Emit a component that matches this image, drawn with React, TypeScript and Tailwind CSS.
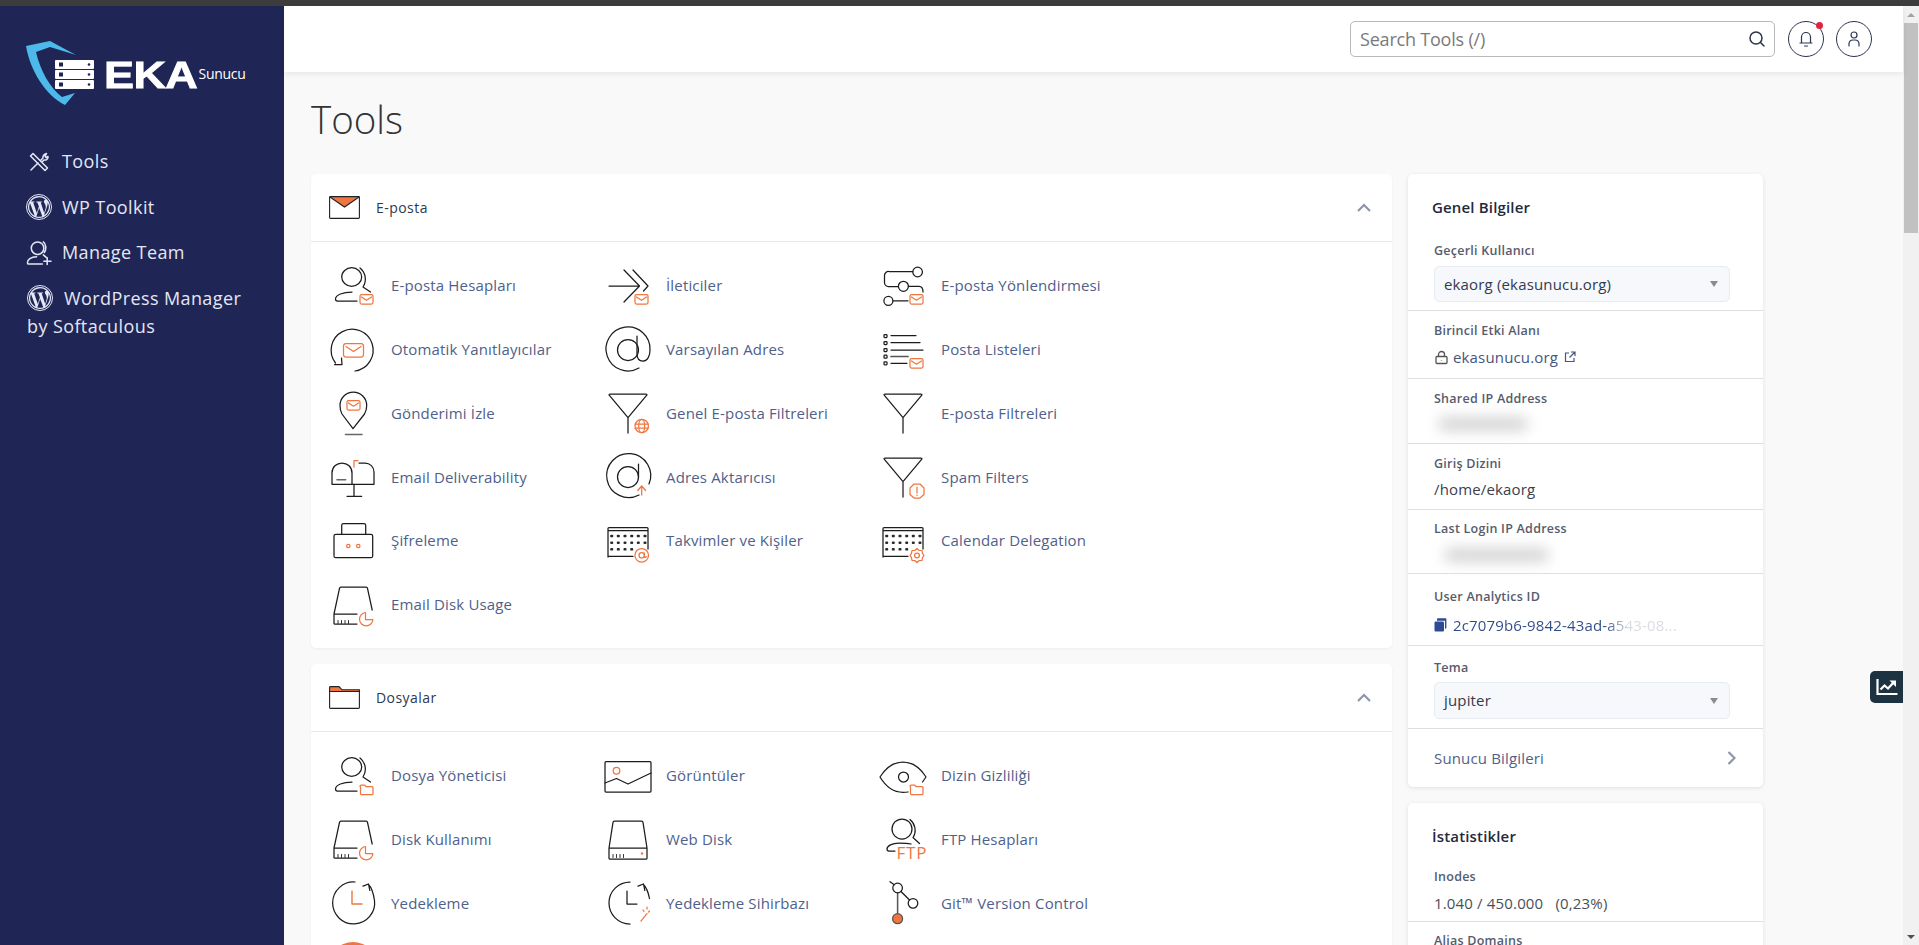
import React from "react";

const K = "#1c1c1c";
const O = "#f0763f";

function Svg({ children }: { children: React.ReactNode }) {
  return (
    <svg width={44} height={44} viewBox="0 0 44 44" fill="none" stroke={K} strokeWidth={1.25} strokeLinecap="round" strokeLinejoin="round" className="shrink-0 overflow-visible">
      {children}
    </svg>
  );
}

const Mail = ({ x = 29, y = 30.5 }: { x?: number; y?: number }) => (
  <g stroke={O}>
    <rect x={x} y={y} width={13} height={9.5} rx={1.5} />
    <path d={`M${x + 1.5} ${y + 2.5}l5 3.2 5-3.2`} />
  </g>
);
const Folder = () => (
  <g stroke={O}>
    <path d="M29.500 33v6.500a1 1 0 0 0 1 1h10.500a1 1 0 0 0 1-1v-6a1 1 0 0 0-1-1h-6l-1.500-1.500h-3.500a1 1 0 0 0-1 1z" />
  </g>
);
const Person = () => (
  <>
    <ellipse cx="20.700" cy="13" rx="10" ry="9.300" />
    <path d="M29 4c5 4 7.500 12 3 19l7.500 5" />
    <path d="M21 28c-9 0-16.500 3-16.500 7 0 1.300.7 2 2 2H26" />
  </>
);
const Funnel = () => <path d="M4 3h36c.7 0 1.200.5.800 1.200L22 26.700 3.200 4.200C2.800 3.500 3.300 3 4 3zM22 26.700V42" />;

const DiskBody = ({ open }: { open?: boolean }) => (
  <>
    <path d={open ? "M41.200 27 36.500 5.300c-.1-.8-.6-1.300-1.500-1.300H10c-.9 0-1.400.5-1.500 1.300L3 31v9.500c0 .3.200.5.500.5H26M3 31h23" : "M3 31 7 5.300c.1-.8.600-1.300 1.500-1.300h27c.9 0 1.400.5 1.500 1.300L41 31v10.300c0 .4-.3.700-.7.700H3.700a.7.7 0 0 1-.7-.7zM3 31h38"} />
    <path d="M7 37.500v3M10.500 37.500v3M14 37.500v3M17.500 37.500v3" strokeWidth={0.9} />
  </>
);
const Pie = () => (
  <g stroke={O}>
    <path d="M34.500 29.500a6.700 6.700 0 1 0 7.400 7h-7.400z" />
  </g>
);
const Cal = () => (
  <>
    <path d="M2 38V9.500c0-.6.400-1 1-1h38c.6 0 1 .4 1 1V30M2 11.500h40M2 37.300h25" />
    {[17, 23.7, 30.3].map((y, r) =>
      [5.700, 12.300, 19, 25.700, 32.300, 39].slice(0, r === 2 ? 4 : 6).map((x) => (
        <rect key={`${x}${y}`} x={x - 1.5} y={y - 1.300} width="3" height="2.600" rx=".9" fill="#2a2a2a" stroke="none" />
      ))
    )}
  </>
);
const ClockBase = () => <path d="M24 1A21 21 0 1 0 43.500 19.500M32 5.200 37.500 3l1.300 6.500M37.500 3.500c3 3 5 9 6 16" />;

const icons: Record<string, React.ReactNode> = {
  account: (
    <Svg>
      <Person />
      <Mail />
    </Svg>
  ),
  forwarder: (
    <Svg>
      <path d="M3 22h29.500M18 6l15.500 16L18 38M27 6l15 16-4.500 5" />
      <Mail />
    </Svg>
  ),
  routing: (
    <Svg>
      <circle cx="36.600" cy="8" r="4.800" />
      <path d="M31.800 7.500H8a4 4 0 0 0-4.500 4v7a4 4 0 0 0 4 4h9.500" />
      <circle cx="22.400" cy="22.300" r="5" />
      <path d="M27.400 22.300h10.600c2.500 0 4 1.500 4 5.700" />
      <circle cx="7.400" cy="36.800" r="4.500" />
      <path d="M12 36.800h15" />
      <Mail />
    </Svg>
  ),
  auto: (
    <Svg>
      <path d="M24 43a21 21 0 1 0-19.500-8M3.500 36.500H11l-.5-6.500" />
      <rect x="12.500" y="15.500" width="20" height="13.500" rx="2.500" stroke={O} />
      <path d="M15 18.500l7.500 5 7.500-5" stroke={O} />
    </Svg>
  ),
  at: (
    <Svg>
      <path d="M33 40a22 22 0 1 1 11-18c0 5-2 11-7 11-4 0-6-3-6-7V8" />
      <circle cx="22" cy="22" r="10.500" />
    </Svg>
  ),
  list: (
    <Svg>
      {[8, 15, 22, 28.700, 35.300].map((y) => (
        <rect key={y} x="3" y={y - 1.500} width="3" height="3" rx=".7" />
      ))}
      <path d="M10 7.500h25M10 14.500h29M10 22h32M10 35.300h16" />
      <path d="M10 28.500h17" strokeWidth="1.700" stroke="#555" />
      <Mail />
    </Svg>
  ),
  track: (
    <Svg>
      <path d="M22 37.700 11 23C9.500 20.500 9 17.500 9 14.500 9 7 15 1 22.300 1S35.700 7 35.700 14.500c0 3-.7 6-2.200 8.500z" />
      <Mail x={16} y={9.500} />
      <path d="M14.500 43.500h16.500" strokeWidth="1.500" stroke="#666" />
    </Svg>
  ),
  funnelGlobe: (
    <Svg>
      <Funnel />
      <g stroke={O}>
        <circle cx="35.700" cy="35" r="6.700" />
        <ellipse cx="35.700" cy="35" rx="3" ry="6.700" />
        <path d="M29 33h13.500M29 37h13.500" />
      </g>
    </Svg>
  ),
  funnel: (
    <Svg>
      <Funnel />
    </Svg>
  ),
  funnelAlert: (
    <Svg>
      <Funnel />
      <g stroke={O}>
        <path d="M33 29h6l4 4v6.500L39 43h-6l-4-3.500V33z" />
        <path d="M36 32v6M36 40v.5" />
      </g>
    </Svg>
  ),
  mailbox: (
    <Svg>
      <path d="M20.700 29.300H1V18c0-6 4.500-10 10-10s10 4 10 10v11.300h22V17c0-5-4-9-9-9h-6" />
      <path d="M23 29.300v12M16 41.300h14.700" />
      <path d="M6 24.700h8.700" strokeWidth="1.500" stroke="#666" />
      <path d="M23 12V5.500h4" stroke={O} />
    </Svg>
  ),
  atUp: (
    <Svg>
      <path d="M33 40a22 22 0 1 1 10-11" />
      <circle cx="22" cy="22" r="10.500" />
      <path d="M32.500 9v13" />
      <path d="M35.700 40V31.500M31.800 35.500l3.900-4.500 3.900 4.500" stroke={O} />
    </Svg>
  ),
  crypt: (
    <Svg>
      <path d="M10.700 15.300V6.500c0-1 .8-1.800 1.800-1.800h20.400c1 0 1.800.8 1.800 1.800v8.800" />
      <rect x="3" y="15.300" width="38.700" height="23.400" rx="1.800" />
      <circle cx="17.300" cy="27" r="1.700" stroke={O} />
      <circle cx="27.300" cy="27" r="1.700" stroke={O} />
    </Svg>
  ),
  calAt: (
    <Svg>
      <Cal />
      <g stroke={O}>
        <circle cx="35.700" cy="36.300" r="6.800" />
        <circle cx="35.700" cy="36.300" r="2.700" />
        <path d="M38.400 34v3.500c0 1.300 1.700 1.300 1.900 0" />
      </g>
    </Svg>
  ),
  calGear: (
    <Svg>
      <Cal />
      <g stroke={O}>
        <path d="M36 29.500l2 1.800 3 .2.500 2.800 1.500 2.200-1.500 2.200-.5 2.800-3 .2-2 1.800-2-1.800-3-.2-.5-2.800L29 36.500l1.500-2.200.5-2.800 3-.2z" />
        <circle cx="36" cy="36.500" r="2.400" />
      </g>
    </Svg>
  ),
  diskPie: (
    <Svg>
      <DiskBody open />
      <Pie />
    </Svg>
  ),
  filePerson: (
    <Svg>
      <Person />
      <Folder />
    </Svg>
  ),
  images: (
    <Svg>
      <rect x="-1" y="7.700" width="46" height="30.300" rx="1" />
      <circle cx="10.500" cy="16.700" r="3.300" stroke={O} />
      <path d="M-1 29l11.500-4.500L22 30l23-11" />
    </Svg>
  ),
  eye: (
    <Svg>
      <path d="M27 38c-2 .3-3.500.3-5 .3-10 0-18-7-23-15.300C4 15 12 8 22 8s18 7 23 15l-3.500 5" />
      <circle cx="22.500" cy="23" r="5" />
      <Folder />
    </Svg>
  ),
  webDisk: (
    <Svg>
      <DiskBody />
      <circle cx="36" cy="36.500" r="1.200" fill={O} stroke="none" />
    </Svg>
  ),
  ftp: (
    <Svg>
      <ellipse cx="21" cy="12" rx="10" ry="10" />
      <path d="M29 2.500c5 4 7 12 3 18l6.500 6M30 27c-4-1-8-1-12-1-7 0-12 3-12 6 0 1.300.7 2 2 2h6" />
      <text x="15.500" y="42" fill={O} stroke="none" fontSize="17" letterSpacing=".8" fontFamily="'Open Sans',sans-serif">
        FTP
      </text>
    </Svg>
  ),
  backup: (
    <Svg>
      <ClockBase />
      <path d="M21 10v13h10" stroke={O} strokeWidth="1.400" />
    </Svg>
  ),
  wizard: (
    <Svg>
      <path d="M24 1A21 21 0 1 0 24 43M32 5.200 37.500 3l1.300 6.500M37.500 3.500c3 3 5 9 6 14" />
      <path d="M21 10v13h10" />
      <path d="M35 40l6-7.500M41 26v2M37 29l1 1.500M43.500 30l-1 1" stroke={O} strokeDasharray="2 1.200" />
    </Svg>
  ),
  git: (
    <Svg>
      <path d="M16.600 12v20.500" stroke="#555" strokeWidth="1.500" />
      <circle cx="16.600" cy="7" r="4.800" />
      <circle cx="32" cy="22.300" r="4.800" />
      <path d="M20 10.500l8.500 8.500M9 .7 13.200 3.700" />
      <circle cx="16.600" cy="37.700" r="5" fill={O} stroke="#555" />
    </Svg>
  ),
  restore: (
    <Svg>
      <circle cx="22" cy="22" r="25" fill={O} stroke="none" />
    </Svg>
  ),
};

type Item = [string, string];
const mail: Item[] = [
  ["account", "E-posta Hesapları"],
  ["forwarder", "İleticiler"],
  ["routing", "E-posta Yönlendirmesi"],
  ["auto", "Otomatik Yanıtlayıcılar"],
  ["at", "Varsayılan Adres"],
  ["list", "Posta Listeleri"],
  ["track", "Gönderimi İzle"],
  ["funnelGlobe", "Genel E-posta Filtreleri"],
  ["funnel", "E-posta Filtreleri"],
  ["mailbox", "Email Deliverability"],
  ["atUp", "Adres Aktarıcısı"],
  ["funnelAlert", "Spam Filters"],
  ["crypt", "Şifreleme"],
  ["calAt", "Takvimler ve Kişiler"],
  ["calGear", "Calendar Delegation"],
  ["diskPie", "Email Disk Usage"],
];
const files: Item[] = [
  ["filePerson", "Dosya Yöneticisi"],
  ["images", "Görüntüler"],
  ["eye", "Dizin Gizliliği"],
  ["diskPie", "Disk Kullanımı"],
  ["webDisk", "Web Disk"],
  ["ftp", "FTP Hesapları"],
  ["backup", "Yedekleme"],
  ["wizard", "Yedekleme Sihirbazı"],
  ["git", "Git™ Version Control"],
  ["restore", ""],
];

function Section({ icon, title, items }: { icon: React.ReactNode; title: string; items: Item[] }) {
  return (
    <section className="rounded-[5px] bg-white shadow-[0_1px_3px_rgba(0,0,0,0.05)]">
      <header className="flex h-[68px] items-center border-b border-[#e8e8e8] pl-[18px] pr-[21px]">
        <span className="flex w-[47px] shrink-0 items-center">{icon}</span>
        <span className="flex-1 text-[14px] tracking-[0.45px] text-[#2c3850]">{title}</span>
        <svg width="14" height="9" viewBox="0 0 14 9" fill="none" stroke="#8d95ab" strokeWidth="2.200">
          <path d="M1 8l6-6 6 6" />
        </svg>
      </header>
      <div className="grid grid-cols-[275px_275px_275px] pb-[11px] pl-[20px] pt-[12px]">
        {items.map(([k, t]) => (
          <div key={k + t} className="flex h-[63.8px] items-center gap-[16px]">
            {icons[k]}
            <span className="-mt-[1px] text-[15px] tracking-[0.16px] text-[#505f8b]">{t}</span>
          </div>
        ))}
      </div>
    </section>
  );
}

function Caret() {
  return <span className="h-0 w-0 border-x-[4px] border-t-[6px] border-x-transparent border-t-[#8b8b8b]" />;
}

function Select({ value, cls }: { value: string; cls: string }) {
  return (
    <div className={`${cls} flex w-[296px] items-center justify-between rounded-[5px] border border-[#e7ebf1] bg-[#f6f8fc] pl-[9px] pr-[11px] text-[15px] tracking-[0.16px] text-[#333b4c]`}>
      {value}
      <Caret />
    </div>
  );
}

function Row({ label, cls, children, last }: { label: string; cls: string; children: React.ReactNode; last?: boolean }) {
  return (
    <div className={`${cls} ${last ? "" : "border-b border-[#dfdfe2]"} pl-[26px]`}>
      <div className="text-[12.500px] font-semibold leading-[18px] tracking-[0.25px] text-[#565b6d]">{label}</div>
      {children}
    </div>
  );
}

function WpIcon() {
  return (
    <svg width="26" height="26" viewBox="0 0 26 26" className="shrink-0">
      <circle cx="13" cy="13" r="12.500" fill="none" stroke="#e6e9f5" strokeWidth="1" />
      <circle cx="13" cy="13" r="11" fill="#e6e9f5" />
      <path fill="#1f2656" d="M3.200 13c0 3.900 2.300 7.200 5.500 8.800L4 8.900C3.500 10.200 3.200 11.600 3.200 13zM19.700 12.500c0-1.200-.4-2.100-.8-2.700-.5-.8-1-1.500-1-2.300 0-.9.700-1.700 1.600-1.700h.1A9.800 9.800 0 0 0 5 7.600h.6c1 0 2.600-.1 2.600-.1.500 0 .6.700.1.800 0 0-.5.100-1.100.1l3.600 10.600 2.100-6.400-1.500-4.200c-.5 0-1-.1-1-.1-.5 0-.5-.8.100-.8 0 0 1.600.1 2.600.1s2.600-.1 2.600-.1c.5 0 .6.700.1.800 0 0-.5.100-1.100.1l3.500 10.600 1-3.300c.4-1.300.7-2.300.7-3.100zM13.200 13.900l-2.900 8.500a9.800 9.800 0 0 0 6-.2l-.1-.1zM21.600 8.300l.1 1c0 1-.2 2.100-.7 3.500l-3 8.600A9.800 9.800 0 0 0 21.600 8.300z" />
    </svg>
  );
}

function SideLink({ icon, children }: { icon: React.ReactNode; children: React.ReactNode }) {
  return (
    <div className="flex h-[45.500px] items-center gap-[10px] pl-[26px] text-[18px] tracking-[0.4px] text-[#e4e7f3]">
      <span className="flex w-[26px] justify-center">{icon}</span>
      {children}
    </div>
  );
}

export default function App() {
  return (
    <div className="relative flex h-[945px] w-full flex-col overflow-hidden bg-[#f9f9f9] font-['Open_Sans',sans-serif]">
      <div className="h-[6px] shrink-0 bg-[#3c3c3c]" />
      <div className="flex min-h-0 flex-1">
        {/* sidebar */}
        <aside className="w-[284px] shrink-0 bg-[#1f2656]">
          <div className="flex h-[102px] items-start pl-[26px] pt-[28px]">
            <svg width="78" height="72" viewBox="0 0 78 72" className="shrink-0">
              <path d="M0 12 24 7l26 14-26-8-14 5C14 36 24 54 36 63l13-4-10 12C19 61 4 36 0 12z" fill="#4db9ea" />
              <g fill="#fff">
                <rect x="29" y="26" width="39" height="9" rx="1" />
                <rect x="29" y="36" width="39" height="9" rx="1" />
                <rect x="29" y="46" width="39" height="9" rx="1" />
              </g>
              <g fill="#1f2656">
                {[30.5, 40.5, 50.5].map((y) => (
                  <g key={y}>
                    <rect x="33" y={y - 2} width="4" height="4" />
                    <circle cx="63" cy={y} r="1.300" />
                  </g>
                ))}
              </g>
            </svg>
            <span className="mt-[22px] origin-left scale-x-[1.25] font-['Liberation_Sans',sans-serif] text-[36px] font-bold leading-[40px] tracking-[-0.5px] text-white [-webkit-text-stroke:0.8px_white]">
              EKA
            </span>
            <span className="ml-[20px] mt-[30px] text-[14px] leading-[20px] tracking-[-0.3px] text-white">Sunucu</span>
          </div>
          <nav className="pt-[31px]">
            <SideLink
              icon={
                <svg width="20" height="20" viewBox="0 0 20 20" fill="none" stroke="#e4e7f3" strokeWidth="1.500" strokeLinecap="round" strokeLinejoin="round">
                  <path d="M1.500 4 4 1.500 18.500 16l-2.500 2.500z" />
                  <path d="M2 18l7-7M11.500 8.500l2.500-2.500c-.5-2 1-4 3.500-4.500L16 4l1 1.500 2-1c.3 2.500-2 4-4 3.500l-1.500 1.500" />
                </svg>
              }
            >
              Tools
            </SideLink>
            <SideLink icon={<WpIcon />}>WP Toolkit</SideLink>
            <SideLink
              icon={
                <svg width="27" height="26" viewBox="0 0 27 26" fill="none" stroke="#e4e7f3" strokeWidth="1.600" strokeLinecap="round">
                  <circle cx="12" cy="8" r="6.500" />
                  <path d="M18 1.500c2.800 2 3.500 7.500 1 11M18 15l3 2.500M11 17c-6 0-9.500 3-9.500 6 0 1 .5 1.500 1.500 1.500h14M22 18v7M18.500 21.500H26" />
                </svg>
              }
            >
              Manage Team
            </SideLink>
            <div className="pl-[27px] pt-[8px] text-[18px] leading-[28px] tracking-[0.4px] text-[#e4e7f3]">
              <div className="flex h-[28px] items-center gap-[11px]">
                <WpIcon />
                WordPress Manager
              </div>
              <div>by Softaculous</div>
            </div>
          </nav>
        </aside>

        {/* main */}
        <div className="flex min-w-0 flex-1 flex-col">
          <header className="z-10 flex h-[66px] shrink-0 items-center justify-end bg-white pr-[31px] shadow-[0_2px_6px_rgba(0,0,0,0.08)]">
            <div className="flex h-[36px] w-[425px] items-center justify-between rounded-[5px] border border-[#b9b9b9] bg-white pl-[9px] pr-[8px] text-[18px] text-[#7a7a7a]">
              <span className="tracking-[-0.2px]">Search Tools (/)</span>
              <svg width="18" height="18" viewBox="0 0 18 18" fill="none" stroke="#2b3545" strokeWidth="1.500" strokeLinecap="round">
                <circle cx="8" cy="8" r="6" />
                <path d="M12.500 12.500 16 16" />
              </svg>
            </div>
            <div className="relative ml-[13px] flex h-[36px] w-[36px] items-center justify-center rounded-full border border-[#2e3450]">
              <svg width="16" height="18" viewBox="0 0 16 18" fill="none" stroke="#2e3450" strokeWidth="1.200" strokeLinecap="round">
                <path d="M2 13h12M3.500 13V7a4.500 4.500 0 0 1 9 0v6M6.500 16h3" />
              </svg>
              <span className="absolute right-[0px] top-[0px] h-[7px] w-[7px] rounded-full bg-[#e0233f]" />
            </div>
            <div className="ml-[12px] flex h-[36px] w-[36px] items-center justify-center rounded-full border border-[#2e3450]">
              <svg width="16" height="18" viewBox="0 0 16 18" fill="none" stroke="#2e3450" strokeWidth="1.200" strokeLinecap="round">
                <circle cx="8" cy="5" r="3" />
                <path d="M3 16v-2.500a4 4 0 0 1 4-3.500h2a4 4 0 0 1 4 3.500V16" />
              </svg>
            </div>
          </header>

          <main className="min-h-0 flex-1 overflow-hidden pl-[27px]">
            <h1 className="pb-[28px] pt-[20px] text-[38.500px] font-light leading-[54px] text-[#333333]">Tools</h1>
            <div className="flex items-start gap-[16px]">
              <div className="flex w-[1081px] shrink-0 flex-col gap-[16px]">
                <Section
                  title="E-posta"
                  items={mail}
                  icon={
                    <svg width="31" height="23" viewBox="0 0 31 23" fill="none" stroke="#222" strokeWidth="1.100">
                      <path d="M.6.6h29.800L15.500 11z" fill={O} stroke="none" />
                      <rect x=".6" y=".6" width="29.800" height="21.800" rx=".8" />
                      <path d="M.6.800 15.500 11 30.400.800" />
                    </svg>
                  }
                />
                <Section
                  title="Dosyalar"
                  items={files}
                  icon={
                    <svg width="31" height="23" viewBox="0 0 31 23" fill="none" stroke="#222" strokeWidth="1.100">
                      <path d="M.6 6V1.500c0-.5.300-.9.900-.9h8.500L13 3.800h17.400V6z" fill={O} stroke="none" />
                      <path d="M.6 6v15.500c0 .5.400.9.900.9h28c.5 0 .9-.4.900-.9V5.500H.6z" />
                      <path d="M.6 6V1.500c0-.5.300-.9.900-.9h8.500L13 3.800h17.400V6" />
                    </svg>
                  }
                />
              </div>

              {/* right panel */}
              <div className="flex w-[355px] shrink-0 flex-col gap-[16px]">
                <div className="rounded-[5px] bg-white shadow-[0_1px_4px_rgba(0,0,0,0.1)]">
                  <div className="pb-[14px] pl-[24px] pt-[23px] text-[15px] font-semibold leading-[20px] tracking-[0.16px] text-[#1f2a3d]">Genel Bilgiler</div>
                  <Row label="Geçerli Kullanıcı" cls="h-[80px] pt-[11px]">
                    <Select value="ekaorg (ekasunucu.org)" cls="mt-[6px] h-[36px]" />
                  </Row>
                  <Row label="Birincil Etki Alanı" cls="h-[68px] pt-[11px]">
                    <div className="mt-[7px] flex items-center gap-[4px] text-[15px] leading-[20px] tracking-[0.16px] text-[#46557f]">
                      <svg width="15" height="15" viewBox="0 0 15 15" fill="none" stroke="#555" strokeWidth="1.300">
                        <rect x="2" y="6.500" width="11" height="7" rx="1" />
                        <path d="M4.500 6.500v-2a3 3 0 0 1 6 0v2M7.500 10v.5" />
                      </svg>
                      ekasunucu.org
                      <svg width="12" height="12" viewBox="0 0 12 12" fill="none" stroke="#46557f" strokeWidth="1.200" className="ml-[2px]">
                        <path d="M5 2H1.500v8.500H10V7M7 1h4v4M11 1 5.500 6.500" />
                      </svg>
                    </div>
                  </Row>
                  <Row label="Shared IP Address" cls="h-[65px] pt-[11px]">
                    <div className="ml-[4px] mt-[9px] h-[14px] w-[90px] rounded-full bg-[#d4d4d4] blur-[7px]" />
                  </Row>
                  <Row label="Giriş Dizini" cls="h-[66px] pt-[11px]">
                    <div className="mt-[6px] text-[15px] leading-[20px] tracking-[0.16px] text-[#3a3f4c]">/home/ekaorg</div>
                  </Row>
                  <Row label="Last Login IP Address" cls="h-[64px] pt-[10px]">
                    <div className="ml-[10px] mt-[10px] h-[14px] w-[105px] rounded-full bg-[#d4d4d4] blur-[7px]" />
                  </Row>
                  <Row label="User Analytics ID" cls="h-[72px] pt-[14px]">
                    <div className="mt-[9px] flex items-center gap-[6px] text-[15px] leading-[20px] tracking-[0.16px]">
                      <svg width="13" height="14" viewBox="0 0 13 14" fill="#2d4a94">
                        <path d="M3 1.500C3 .800 3.500.3 4.200.3h7c.7 0 1.200.5 1.200 1.200v8c0 .7-.5 1.200-1.200 1.200H11V2.800H3z" />
                        <rect x=".5" y="3.500" width="9.500" height="10" rx="1.200" />
                      </svg>
                      <span className="bg-[linear-gradient(90deg,#2f4a86_0%,#2f4a86_68%,#d9dbe0_78%,#d9dbe0_100%)] bg-clip-text text-transparent">
                        2c7079b6-9842-43ad-a543-08...
                      </span>
                    </div>
                  </Row>
                  <Row label="Tema" cls="h-[83px] pt-[13px]">
                    <Select value="jupiter" cls="mt-[5px] h-[37px]" />
                  </Row>
                  <div className="flex h-[58px] items-center justify-between pl-[26px] pr-[27px] text-[15px] tracking-[0.16px] text-[#505f8b]">
                    Sunucu Bilgileri
                    <svg width="9" height="14" viewBox="0 0 9 14" fill="none" stroke="#8d95ab" strokeWidth="2.200">
                      <path d="M1.500 1l6 6-6 6" />
                    </svg>
                  </div>
                </div>

                <div className="rounded-[5px] bg-white shadow-[0_1px_4px_rgba(0,0,0,0.1)]">
                  <div className="pb-[11px] pl-[24px] pt-[23px] text-[15px] font-semibold leading-[20px] tracking-[0.16px] text-[#1f2a3d]">İstatistikler</div>
                  <Row label="Inodes" cls="h-[65px] pt-[11px]">
                    <div className="mt-[7px] text-[15px] leading-[20px] tracking-[0.16px] text-[#4b4f58]">1.040 / 450.000&nbsp;&nbsp; (0,23%)</div>
                  </Row>
                  <Row label="Alias Domains" cls="h-[60px] pt-[10px]" last>
                    <div />
                  </Row>
                </div>
              </div>
            </div>
          </main>
        </div>

        {/* browser scrollbar */}
        <div className="flex w-[16px] shrink-0 flex-col bg-[#f1f1f1] px-[1px]">
          <div className="flex h-[17px] items-center justify-center">
            <span className="h-0 w-0 border-x-[4px] border-b-[4px] border-x-transparent border-b-[#a3a3a3]" />
          </div>
          <div className="h-[210px] bg-[#c1c1c1]" />
          <div className="flex-1" />
          <div className="flex h-[17px] items-center justify-center">
            <span className="h-0 w-0 border-x-[4px] border-t-[4px] border-x-transparent border-t-[#505050]" />
          </div>
        </div>
      </div>

      {/* floating stats tab */}
      <div className="absolute right-[16px] top-[671px] flex h-[32px] w-[33px] items-center justify-center rounded-l-[5px] bg-[#1e3342]">
        <svg width="22" height="18" viewBox="0 0 22 18" fill="none" stroke="#fff" strokeWidth="2.200">
          <path d="M1.500 1v15h20" />
          <path d="M4.500 11.500l4-4 3.500 3 5.500-6" />
          <path d="M13.500 2.500h6.500v6.500z" fill="#fff" stroke="none" />
        </svg>
      </div>
    </div>
  );
}
